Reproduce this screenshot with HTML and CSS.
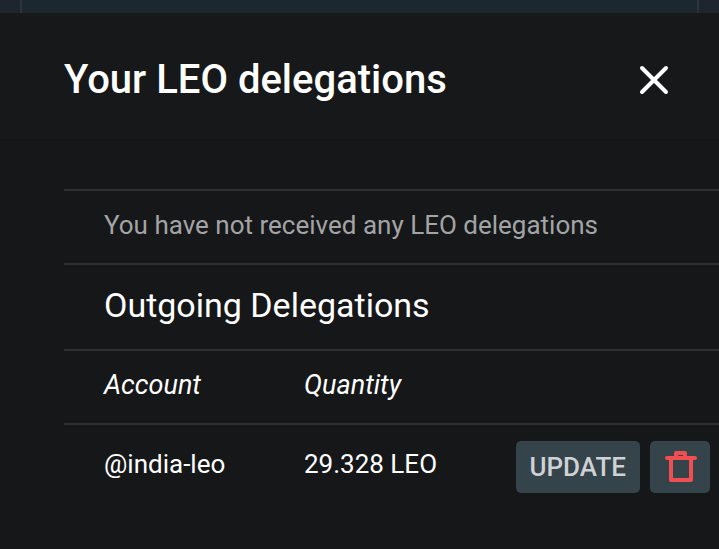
FILE: index.html
```html
<!DOCTYPE html>
<html lang="en">
<head>
  <meta charset="UTF-8" />
  <meta name="viewport" content="width=device-width, initial-scale=1" />
  <title>Your LEO delegations</title>
  <link rel="stylesheet" href="styles.css">
</head>
<body>

<div class="backdrop"><div class="backdrop-card"></div></div>

<main class="modal">
  <header class="modal-header">
    <h1>Your LEO delegations</h1>
    <button type="button" class="close" aria-label="Close">
      <svg width="30" height="30" viewBox="0 0 30 30"><path d="M3 3L27 27M27 3L3 27" /></svg>
    </button>
  </header>

  <div class="modal-body">
    <table class="delegations">
      <tbody>
        <tr>
          <td colspan="3" class="empty">You have not received any LEO delegations</td>
        </tr>
        <tr>
          <td colspan="3"><h2>Outgoing Delegations</h2></td>
        </tr>
        <tr>
          <th scope="col" class="account">Account</th>
          <th scope="col">Quantity</th>
          <td></td>
        </tr>
        <tr class="entry">
          <td>@india-leo</td>
          <td>29.328 LEO</td>
          <td class="actions">
            <div class="buttons">
              <button type="button" class="btn">Update</button>
              <button type="button" class="btn btn-delete" aria-label="Delete">
                <svg width="32" height="34" viewBox="0 0 32 34"><path d="M3 8H31M12 8V3H21V8M7 8V30H27V8" /></svg>
              </button>
            </div>
          </td>
        </tr>
      </tbody>
    </table>
  </div>
</main>

</body>
</html>
```

FILE: styles.css
```css
* {
  box-sizing: border-box;
}
body {
  font-family: Roboto, Arial, sans-serif;
  font-size: 26px;
  line-height: 32px;
  background-color: #161719;
  color: #fff;
  margin: 0;
  overflow-x: hidden;
}
h1, h2 {
  margin: 0;
}
button {
  font-family: inherit;
  border: 0;
  cursor: pointer;
}
svg {
  display: block;
  fill: none;
  stroke-linecap: round;
  stroke-linejoin: round;
  overflow: visible;
}
.backdrop {
  height: 13px;
  padding: 0 20px;
  background-color: #1f252f;
}
.backdrop-card {
  height: 100%;
  background-color: #1c2830;
  border: solid #2c3440;
  border-width: 0 2px;
}
.modal {
  background-color: #161719;
}
.modal-header {
  display: flex;
  align-items: center;
  justify-content: space-between;
  padding: 42px 50px 34px 64px;
  background-color: #17181a;
  border-bottom: 2px solid #141517;
}
h1 {
  font-size: 40px;
  font-weight: 500;
  line-height: 50px;
}
.close {
  padding: 0;
  background: none;
  stroke: #fff;
  stroke-width: 4;
}
.modal-body {
  padding: 48px 0 48px 64px;
}
.delegations {
  width: 100%;
  border-collapse: separate;
  border-spacing: 0;
}
td, th {
  padding: 18px 0 22px 40px;
  border-top: 2px solid #2e2f31;
  font-weight: 400;
  text-align: left;
}
th {
  font-size: 27px;
  font-style: italic;
}
.account {
  width: 200px;
}
.empty {
  color: #a3a4a5;
}
h2 {
  font-size: 34px;
  font-weight: 400;
  line-height: 44px;
}
.entry td {
  padding-top: 23px;
  vertical-align: top;
}
.entry .actions {
  padding-top: 16px;
  padding-right: 9px;
}
.buttons {
  display: flex;
  justify-content: flex-end;
  gap: 10px;
}
.btn {
  display: flex;
  align-items: center;
  height: 52px;
  padding: 0 14px;
  border-radius: 5px;
  background-color: #35434a;
  color: #ced2d4;
  font-size: 26px;
  font-weight: 500;
  text-transform: uppercase;
}
.btn-delete {
  stroke: #f04e50;
  stroke-width: 4;
}
```
